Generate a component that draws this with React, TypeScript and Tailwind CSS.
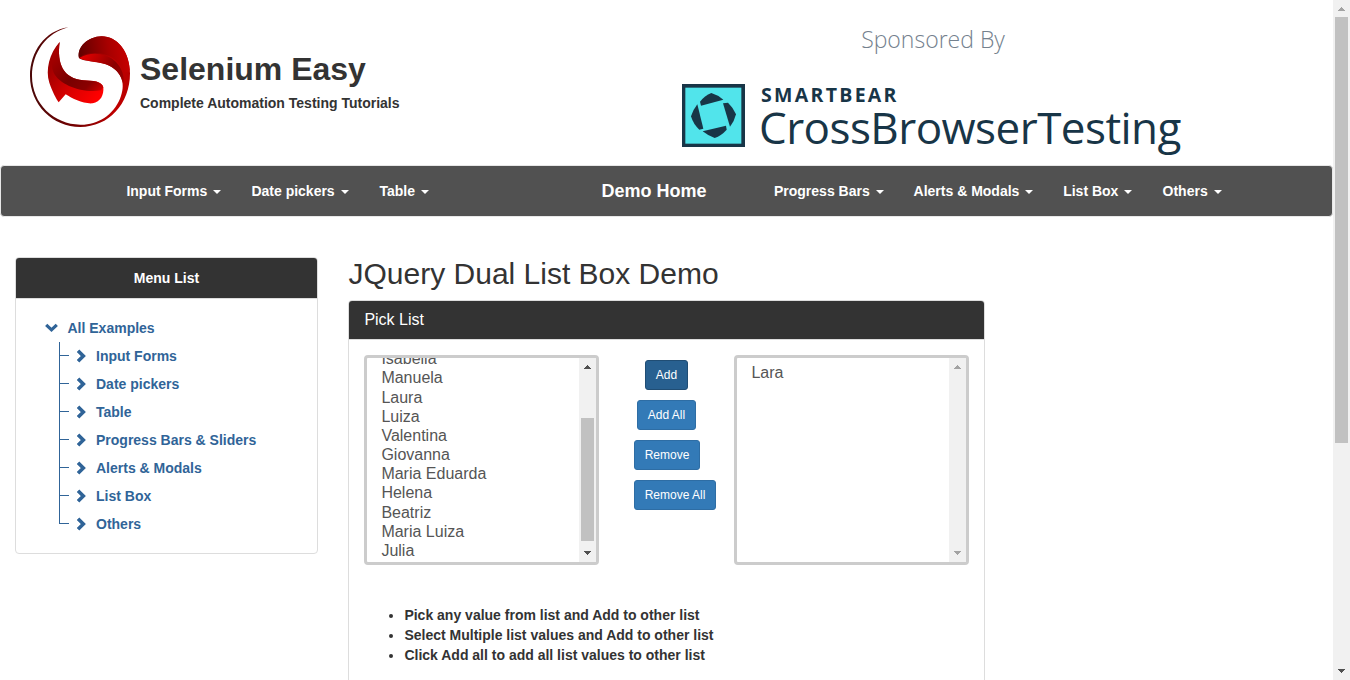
import React from "react";

const names = ["Isabella", "Manuela", "Laura", "Luiza", "Valentina", "Giovanna", "Maria Eduarda", "Helena", "Beatriz", "Maria Luiza", "Julia"];
const menu = ["Input Forms", "Date pickers", "Table", "Progress Bars & Sliders", "Alerts & Modals", "List Box", "Others"];
const tips = [
  "Pick any value from list and Add to other list",
  "Select Multiple list values and Add to other list",
  "Click Add all to add all list values to other list",
];

function Logo() {
  return (
    <svg className="h-[100px] w-[100px] shrink-0" viewBox="30 21 300 300">
      <defs>
        <linearGradient id="ring" gradientUnits="userSpaceOnUse" x1="30" y1="0" x2="330" y2="0">
          <stop offset="0" stopColor="#4a0808" />
          <stop offset="0.5" stopColor="#7a0000" />
          <stop offset="0.85" stopColor="#c00000" />
          <stop offset="1" stopColor="#b80000" />
        </linearGradient>
        <linearGradient id="fold" gradientUnits="userSpaceOnUse" x1="178" y1="100" x2="325" y2="80">
          <stop offset="0" stopColor="#620000" />
          <stop offset="0.6" stopColor="#a80000" />
          <stop offset="1" stopColor="#c80000" />
        </linearGradient>
        <linearGradient id="under" gradientUnits="userSpaceOnUse" x1="190" y1="110" x2="320" y2="190">
          <stop offset="0" stopColor="#e00000" />
          <stop offset="0.6" stopColor="#8a0000" />
          <stop offset="1" stopColor="#a00000" />
        </linearGradient>
        <linearGradient id="tail" gradientUnits="userSpaceOnUse" x1="85" y1="150" x2="230" y2="240">
          <stop offset="0" stopColor="#a00000" />
          <stop offset="0.5" stopColor="#d80000" />
          <stop offset="1" stopColor="#ff0000" />
        </linearGradient>
        <linearGradient id="tailFold" gradientUnits="userSpaceOnUse" x1="110" y1="90" x2="240" y2="210">
          <stop offset="0" stopColor="#a80000" />
          <stop offset="0.5" stopColor="#780000" />
          <stop offset="0.8" stopColor="#8a0000" />
          <stop offset="1" stopColor="#c80000" />
        </linearGradient>
      </defs>
      <path fill="url(#ring)" d="M145 22C75 32 30 95 30 168C30 254 98 321 181 321C266 321 330 252 330 160C330 96 292 49 245 49C204 50 170 82 177 114C190 126 238 122 268 137C307 156 318 194 300 236C279 286 232 315 181 314C102 313 36 252 36 168C36 98 80 38 145 22Z" />
      <path fill="url(#under)" d="M179 113C215 94 258 99 288 126C306 145 314 168 310 192C303 165 290 148 268 137C240 124 208 128 179 115Z" />
      <path fill="url(#fold)" d="M177 114C170 80 204 50 245 49C291 49 326 92 329 150C325 158 312 160 306 150C294 113 250 90 195 103C189 105 183 109 177 114Z" />
      <path fill="url(#tail)" d="M119 66C88 100 76 150 88 188C97 215 108 235 116 247L137 223C158 236 188 252 218 250C242 246 252 225 250 202C246 184 218 182 190 181C130 175 110 132 119 66Z" />
      <path fill="url(#tailFold)" d="M119 66C98 96 89 131 101 158C119 195 187 220 243 211L250 202C246 184 218 182 190 181C130 175 110 132 119 66Z" />
    </svg>
  );
}

function BearMark() {
  return (
    <svg className="h-[63px] w-[63px] shrink-0" viewBox="0 0 189 189">
      <rect width="189" height="189" fill="#183547" />
      <rect x="10" y="11" width="168" height="168" fill="#51e4eb" />
      <g fill="#183547">
        <path d="M54 53Q68 35 88 27Q108 33 124 47L57 65Z" />
        <path d="M123 58L138 56Q154 71 162 91Q157 112 144 128Z" />
        <path d="M46 61L64 134L52 137Q34 121 27 97Q34 76 46 61Z" />
        <path d="M62 142L132 125L134 137Q118 155 98 162Q78 155 62 142Z" />
      </g>
    </svg>
  );
}

function NavItem({ label, w }: { label: string; w: string }) {
  return (
    <li className={"flex shrink-0 items-center whitespace-nowrap " + w}>
      <span>{label}</span>
      <span className="ml-1.5 mt-px border-x-4 border-t-4 border-x-transparent border-t-white" />
    </li>
  );
}

function Arrow({ up, color }: { up?: boolean; color: string }) {
  return (
    <svg className={"h-[17px] w-[17px] shrink-0 " + color} viewBox="0 0 17 17" fill="currentColor" shapeRendering="crispEdges">
      <path d={up ? "M5 11L8.5 7L12 11Z" : "M5 6L8.5 10L12 6Z"} />
    </svg>
  );
}

function Chevron({ down }: { down?: boolean }) {
  return down ? (
    <svg className="h-[14px] w-[14px]" viewBox="0 0 14 14" fill="none" stroke="currentColor" strokeWidth="3.2">
      <path d="M2.2 3.8L7.5 8.8L12.8 3.8" />
    </svg>
  ) : (
    <svg className="h-[14px] w-[14px]" viewBox="0 0 14 14" fill="none" stroke="currentColor" strokeWidth="3.6">
      <path d="M4 1.8L9.3 7L4 12.2" />
    </svg>
  );
}

function PickButton({ label, look }: { label: string; look: string }) {
  return (
    <button className={"h-[30px] whitespace-nowrap rounded-[3px] border text-xs leading-[18px] text-white " + look}>{label}</button>
  );
}

export default function App() {
  return (
    <div className="flex h-[680px] w-[1350px] overflow-hidden bg-white font-['Liberation_Sans',Arial,sans-serif] text-sm text-[#333]">
      <main className="w-[1333px] shrink-0">
        <header className="flex h-[165px] pl-[30px] pt-[27px]">
          <Logo />
          <div className="w-[552px] shrink-0 pl-[10px] pt-[22px] font-bold">
            <h1 className="whitespace-nowrap text-[32px] leading-10">Selenium Easy</h1>
            <p className="mt-1 leading-5">Complete Automation Testing Tutorials</p>
          </div>
          <div className="w-[502px] font-['Open_Sans',sans-serif] text-[#183547]">
            <p className="-mt-[6px] text-center text-[23px] font-light leading-9 text-[#74818e]">Sponsored By</p>
            <div className="mt-[27px] flex">
              <BearMark />
              <div className="pl-[15px]">
                <p className="pl-px text-[19.5px] font-bold leading-[22px] tracking-[2.3px]">SMARTBEAR</p>
                <p className="-mt-[2px] -ml-px whitespace-nowrap text-[44px] leading-[46px] tracking-[-0.55px]">CrossBrowserTesting</p>
              </div>
            </div>
          </div>
        </header>

        <nav className="flex h-[52px] items-center rounded border border-[#e7e7e7] bg-[#515151] pl-[125.4px] font-bold text-white">
          <ul className="flex w-[475px]">
            <NavItem label="Input Forms" w="w-[125px]" />
            <NavItem label="Date pickers" w="w-[128px]" />
            <NavItem label="Table" w="w-[60px]" />
          </ul>
          <div className="w-[172.6px] text-lg">Demo Home</div>
          <ul className="flex">
            <NavItem label="Progress Bars" w="w-[139.6px]" />
            <NavItem label="Alerts & Modals" w="w-[149.6px]" />
            <NavItem label="List Box" w="w-[99.4px]" />
            <NavItem label="Others" w="w-[80px]" />
          </ul>
        </nav>

        <div className="flex pl-[15px] pt-[40px]">
          <aside className="h-[297px] w-[303px] shrink-0 overflow-hidden rounded border border-[#ddd]">
            <h2 className="h-[41px] border-b border-[#ddd] bg-[#333] text-center font-bold leading-10 text-white">Menu List</h2>
            <div className="pl-[28px] pt-[15px] font-bold text-[#306498]">
              <div className="flex h-7 items-center">
                <Chevron down />
                <span className="ml-[9.5px]">All Examples</span>
              </div>
              <ul className="ml-[15px]">
                {menu.map((m, i) => (
                  <li key={m} className="flex h-7 items-center">
                    <span className="flex h-7 w-[10px] flex-col">
                      <span className="h-[14px] border-b border-l border-[#306498]" />
                      <span className={i < menu.length - 1 ? "h-[14px] border-l border-[#306498]" : "h-[14px]"} />
                    </span>
                    <span className="ml-[5px]">
                      <Chevron />
                    </span>
                    <span className="ml-[8px]">{m}</span>
                  </li>
                ))}
              </ul>
            </div>
          </aside>

          <section className="ml-[30px] w-[637px]">
            <h2 className="h-[43px] whitespace-nowrap pl-[0.5px] text-[30px] leading-[33px]">JQuery Dual List Box Demo</h2>
            <div className="h-[460px] overflow-hidden rounded border border-[#ddd]">
              <h3 className="h-[39px] border-b border-[#ddd] bg-[#333] pl-[15.4px] text-base leading-[37px] text-white">Pick List</h3>
              <div className="flex pl-[15px] pt-[15px] text-base text-[#555]">
                <div className="flex h-[210px] w-[235px] justify-between overflow-hidden rounded border-[3px] border-[#ccc]">
                  <ul className="-mt-[8.85px] pl-[14.4px]">
                    {names.map((n) => (
                      <li key={n} className="h-[19.1875px] whitespace-nowrap leading-[19.1875px]">{n}</li>
                    ))}
                  </ul>
                  <div className="flex w-[17px] flex-col bg-[#f1f1f1]">
                    <Arrow up color="text-[#505050]" />
                    <div className="mx-[2px] mb-[4px] mt-[43px] h-[123px] shrink-0 bg-[#c1c1c1]" />
                    <Arrow color="text-[#505050]" />
                  </div>
                </div>
                <div className="ml-[35px] flex w-[100px] flex-col items-start gap-[10px] pt-[5px]">
                  <PickButton label="Add" look="ml-[11px] w-[43px] border-[#204d74] bg-[#286090]" />
                  <PickButton label="Add All" look="ml-[3px] w-[59px] border-[#2e6da4] bg-[#337ab7]" />
                  <PickButton label="Remove" look="w-[66px] border-[#2e6da4] bg-[#337ab7]" />
                  <PickButton label="Remove All" look="w-[82px] border-[#2e6da4] bg-[#337ab7]" />
                </div>
                <div className="flex h-[210px] w-[235px] justify-between rounded border-[3px] border-[#ccc]">
                  <div className="pl-[14.4px] pt-[5px] leading-[19.2px]">Lara</div>
                  <div className="flex w-[17px] flex-col justify-between bg-[#f1f1f1]">
                    <Arrow up color="text-[#a3a3a3]" />
                    <Arrow color="text-[#a3a3a3]" />
                  </div>
                </div>
              </div>
              <ul className="mt-[40px] list-disc pl-[55.4px] font-bold leading-5">
                {tips.map((t) => (
                  <li key={t}>{t}</li>
                ))}
              </ul>
            </div>
          </section>
        </div>
      </main>

      <div className="flex w-[17px] shrink-0 flex-col bg-[#f1f1f1]">
        <Arrow up color="text-[#a3a3a3]" />
        <div className="mx-[2px] h-[426px] bg-[#c1c1c1]" />
        <div className="flex-1" />
        <Arrow color="text-[#505050]" />
      </div>
    </div>
  );
}
